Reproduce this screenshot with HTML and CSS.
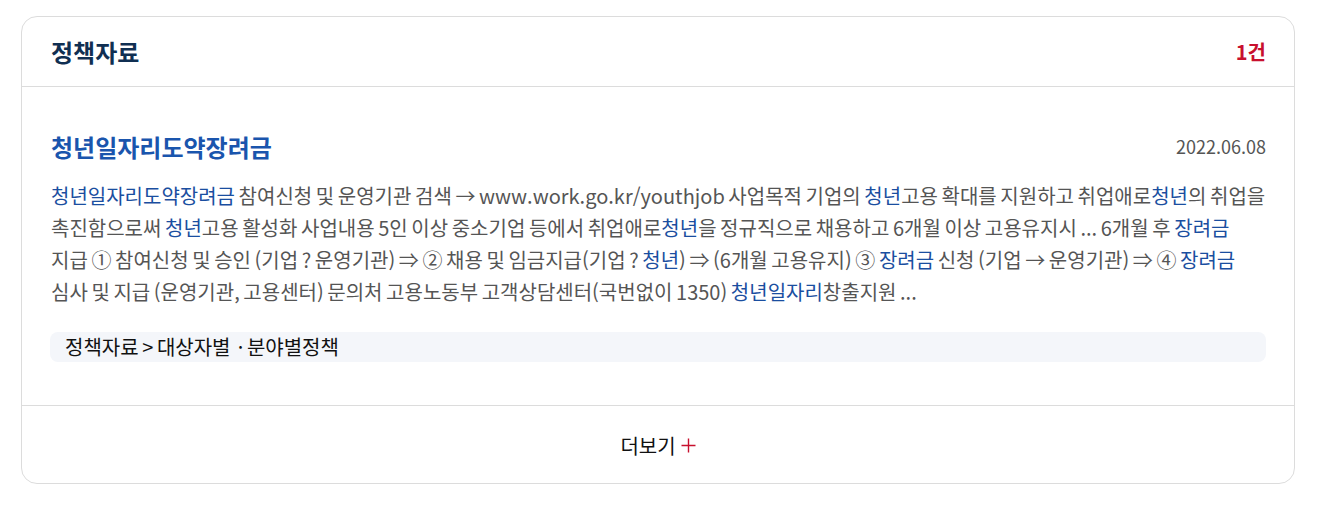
FILE: index.html
```html
<!DOCTYPE html>
<html lang="ko">
<head>
    <meta charset="UTF-8" />
    <title>정책자료</title>
    <link rel="stylesheet" href="styles.css">
</head>
<body>
    <div class="result-box">
        <div class="result-head">
            <h2 class="result-title">정책자료</h2>
            <span class="result-count">1건</span>
        </div>

        <div class="result-item">
            <div class="item-top">
                <a href="#" class="item-title">청년일자리도약장려금</a>
                <span class="item-date">2022.06.08</span>
            </div>
            <p class="item-desc">
                <em>청년일자리도약장려금</em> 참여신청 및 운영기관 검색 → www.work.go.kr/youthjob 사업목적 기업의 <em>청년</em>고용 확대를 지원하고 취업애로<em>청년</em>의 취업을 촉진함으로써 <em>청년</em>고용 활성화 사업내용 5인 이상 중소기업 등에서 취업애로<em>청년</em>을 정규직으로 채용하고 6개월 이상 고용유지시 ... 6개월 후 <em>장려금</em><br>
                지급 ① 참여신청 및 승인 (기업 ? 운영기관) ⇒ ② 채용 및 임금지급(기업 ? <em>청년</em>) ⇒ (6개월 고용유지) ③ <em>장려금</em> 신청 (기업 → 운영기관) ⇒ ④ <em>장려금</em><br>
                심사 및 지급 (운영기관, 고용센터) 문의처 고용노동부 고객상담센터(국번없이 1350) <em>청년일자리</em>창출지원 ...
            </p>
            <div class="item-path">정책자료 &gt; 대상자별 &nbsp;· 분야별정책</div>
        </div>

        <div class="result-more">
            <a href="#" class="more-link">더보기<svg class="plus" width="15" height="15" viewBox="0 0 15 15"><path d="M7.5 0.5V14.5M0.5 7.5H14.5" stroke="#c8102e" stroke-width="1.4" fill="none"/></svg></a>
        </div>
    </div>
</body>
</html>
```

FILE: styles.css
```css
* {
    margin: 0;
    padding: 0;
    box-sizing: border-box;
}
body {
    font-family: "Noto Sans CJK KR", "Noto Sans", sans-serif;
    background-color: #fff;
    color: #222;
}
a {
    text-decoration: none;
}
.result-box {
    margin: 16px 23px 0 21px;
    border: 1px solid #dcdcdc;
    border-radius: 16px;
    background-color: #fff;
}
.result-head {
    height: 70px;
    display: flex;
    align-items: center;
    justify-content: space-between;
    padding: 0 28px 0 29px;
    border-bottom: 1px solid #dcdcdc;
}
.result-title {
    font-size: 24px;
    font-weight: 700;
    color: #102f52;
}
.result-count {
    font-size: 20px;
    font-weight: 700;
    color: #c8102e;
}
.result-item {
    padding: 43px 28px 43px 28px;
    border-bottom: 1px solid #dcdcdc;
}
.item-top {
    display: flex;
    align-items: center;
    justify-content: space-between;
    height: 32px;
}
.item-title {
    font-size: 24px;
    font-weight: 700;
    color: #1a55ad;
    padding-left: 1px;
}
.item-date {
    font-size: 18px;
    color: #555;
}
.item-desc {
    margin-top: 18px;
    font-size: 20px;
    line-height: 32px;
    color: #555;
    word-spacing: -2px;
    padding-left: 1px;
}
.item-desc em {
    font-style: normal;
    color: #1a4ea0;
}
.item-path {
    margin-top: 24px;
    height: 30px;
    line-height: 30px;
    padding-left: 15px;
    border-radius: 8px;
    background-color: #f4f6fa;
    font-size: 20px;
    color: #111;
    word-spacing: -2px;
}
.result-more {
    height: 77px;
    display: flex;
    align-items: center;
    justify-content: center;
}
.more-link {
    display: flex;
    align-items: center;
    font-size: 20px;
    color: #111;
    padding-top: 2px;
}
.more-link .plus {
    margin-left: 5px;
}
```
